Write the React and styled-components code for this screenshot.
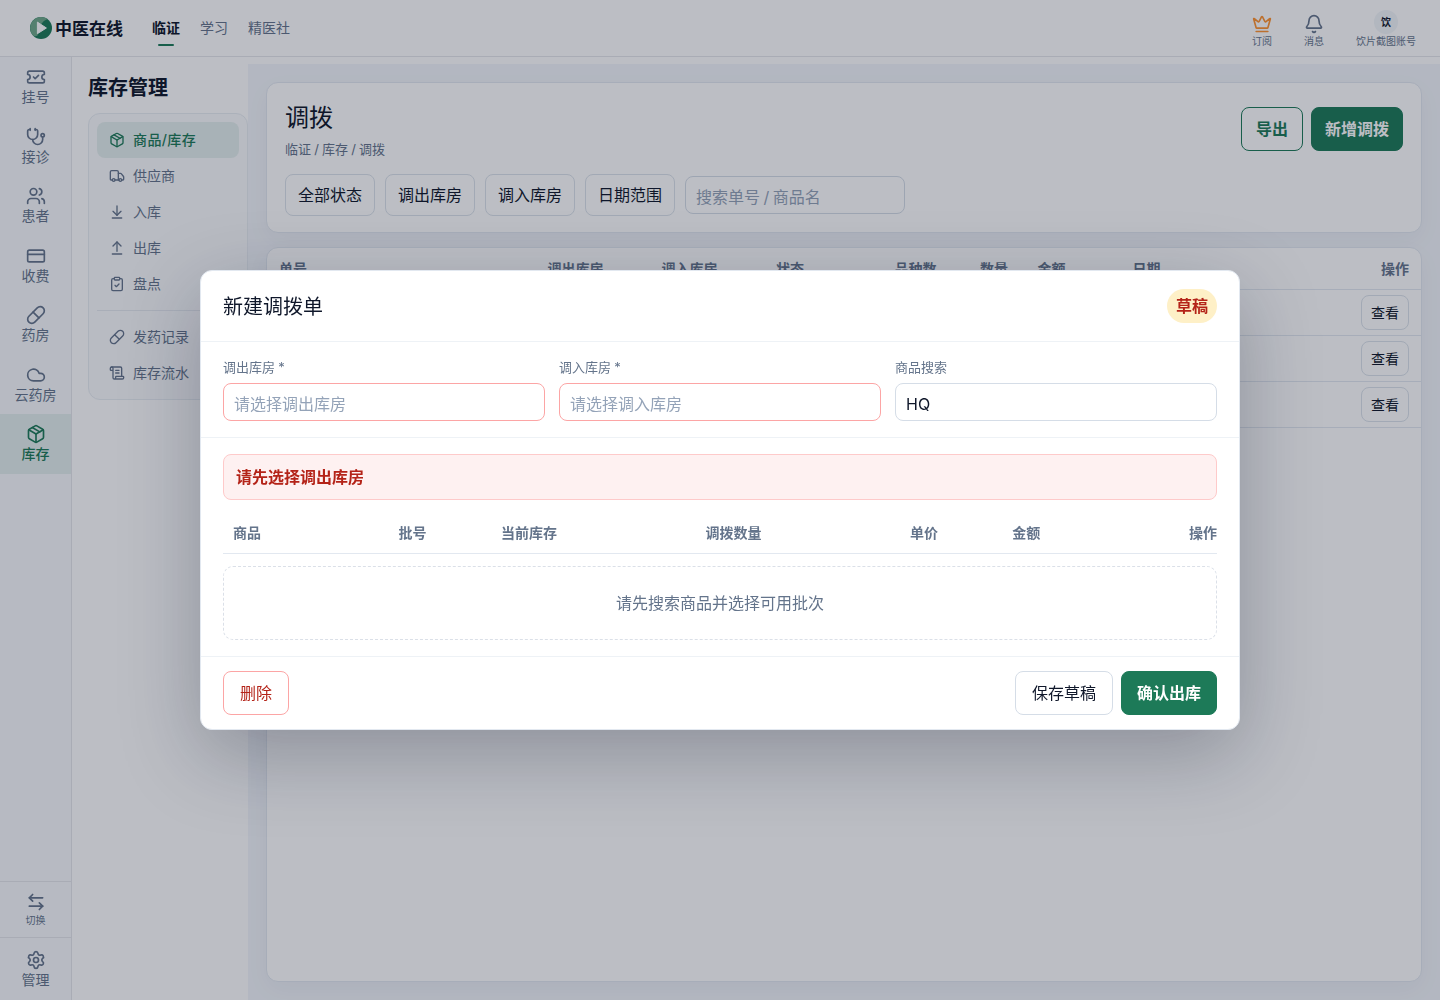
import React from "react";
import styled, { createGlobalStyle } from "styled-components";
import {
  ArrowDownToLine,
  ArrowLeftRight,
  ArrowUpFromLine,
  Bell,
  ClipboardCheck,
  Cloud,
  CreditCard,
  Crown,
  Package,
  Pill,
  ScrollText,
  Settings,
  Stethoscope,
  TicketCheck,
  Truck,
  Users,
} from "lucide-react";

const railItems = [
  { label: "挂号", icon: TicketCheck },
  { label: "接诊", icon: Stethoscope },
  { label: "患者", icon: Users },
  { label: "收费", icon: CreditCard },
  { label: "药房", icon: Pill },
  { label: "云药房", icon: Cloud },
  { label: "库存", icon: Package, active: true },
];

const menuItems = [
  { label: "商品/库存", icon: Package, active: true },
  { label: "供应商", icon: Truck },
  { label: "入库", icon: ArrowDownToLine },
  { label: "出库", icon: ArrowUpFromLine },
  { label: "盘点", icon: ClipboardCheck },
];

const recordItems = [
  { label: "发药记录", icon: Pill },
  { label: "库存流水", icon: ScrollText },
];

const filters = ["全部状态", "调出库房", "调入库房", "日期范围"];
const orderColumns = ["单号", "调出库房", "调入库房", "状态", "品种数", "数量", "金额", "日期", "操作"];
const batchColumns = ["商品", "批号", "当前库存", "调拨数量", "单价", "金额", "操作"];

const Logo = () => (
  <svg width="22" height="22" viewBox="0 0 22 22">
    <circle cx="11" cy="11" r="11" fill="#1d7a58" />
    <path d="M3 18.5A11 11 0 0 1 17.5 2.1Q9 5 7.5 18.5Q5 19.8 3 18.5Z" fill="#6fa98a" />
    <path d="M7.4 5.1v11.6l9-5.7z" fill="#fff" stroke="#fff" strokeWidth="1" strokeLinejoin="round" />
  </svg>
);

const MenuLink = ({ item }) => {
  const Icon = item.icon;
  return (
    <MenuItem $active={item.active}>
      <Icon size={16} strokeWidth={2} />
      <MenuText>{item.label}</MenuText>
    </MenuItem>
  );
};

const TransferDialog = () => (
  <Backdrop>
    <Dialog>
      <DialogHeader>
        <DialogTitle>新建调拨单</DialogTitle>
        <StatusBadge>草稿</StatusBadge>
      </DialogHeader>
      <FieldRow>
        <Field>
          <FieldLabel>调出库房 *</FieldLabel>
          <Input $invalid placeholder="请选择调出库房" />
        </Field>
        <Field>
          <FieldLabel>调入库房 *</FieldLabel>
          <Input $invalid placeholder="请选择调入库房" />
        </Field>
        <Field>
          <FieldLabel>商品搜索</FieldLabel>
          <Input defaultValue="HQ" />
        </Field>
      </FieldRow>
      <DialogBody>
        <Alert>请先选择调出库房</Alert>
        <BatchHead>
          {batchColumns.map((name) => (
            <span key={name}>{name}</span>
          ))}
        </BatchHead>
        <Empty>请先搜索商品并选择可用批次</Empty>
      </DialogBody>
      <DialogFooter>
        <Button $variant="danger">删除</Button>
        <Actions>
          <Button>保存草稿</Button>
          <Button $variant="primary">确认出库</Button>
        </Actions>
      </DialogFooter>
    </Dialog>
  </Backdrop>
);

const App = () => (
  <>
    <GlobalStyle />
    <Page>
      <TopBar>
        <Brand>
          <Logo />
          <BrandName>中医在线</BrandName>
        </Brand>
        <TopNav>
          <TopLink $active>临证</TopLink>
          <TopLink>学习</TopLink>
          <TopLink>精医社</TopLink>
        </TopNav>
        <TopActions>
          <TopAction $icon="#ff9430">
            <Crown size={20} strokeWidth={2} />
            订阅
          </TopAction>
          <TopAction>
            <Bell size={20} strokeWidth={2} />
            消息
          </TopAction>
          <Account>
            <Avatar>饮</Avatar>
            饮片截图账号
          </Account>
        </TopActions>
      </TopBar>
      <Body>
        <Rail>
          {railItems.map(({ label, icon: Icon, active }) => (
            <RailItem key={label} $active={active}>
              <Icon size={20} strokeWidth={2} />
              {label}
            </RailItem>
          ))}
          <RailSpacer />
          <RailSwitch>
            <ArrowLeftRight size={20} strokeWidth={2} />
            切换
          </RailSwitch>
          <RailManage>
            <Settings size={20} strokeWidth={2} />
            管理
          </RailManage>
        </Rail>
        <SidePanel>
          <SideTitle>库存管理</SideTitle>
          <Menu>
            {menuItems.map((item) => (
              <MenuLink key={item.label} item={item} />
            ))}
            <MenuDivider />
            {recordItems.map((item) => (
              <MenuLink key={item.label} item={item} />
            ))}
          </Menu>
        </SidePanel>
        <Main>
          <Card>
            <CardHeader>
              <Heading>
                <PageTitle>调拨</PageTitle>
                <Crumbs>临证 / 库存 / 调拨</Crumbs>
              </Heading>
              <Actions>
                <Button $variant="outline">导出</Button>
                <Button $variant="primary" $compact>新增调拨</Button>
              </Actions>
            </CardHeader>
            <FilterRow>
              {filters.map((name) => (
                <FilterButton key={name}>{name}</FilterButton>
              ))}
              <SearchInput placeholder="搜索单号 / 商品名" />
            </FilterRow>
          </Card>
          <TableCard>
            <OrderHead>
              {orderColumns.map((name) => (
                <span key={name}>{name}</span>
              ))}
            </OrderHead>
            {[1, 2, 3].map((row) => (
              <OrderRow key={row}>
                <ViewButton>查看</ViewButton>
              </OrderRow>
            ))}
          </TableCard>
        </Main>
      </Body>
    </Page>
    <TransferDialog />
  </>
);

const GlobalStyle = createGlobalStyle`
  * {
    box-sizing: border-box;
  }

  body {
    margin: 0;
    background: #fff;
    color: #0f172a;
    font-family: Inter, "Noto Sans CJK SC", sans-serif;
    font-size: 16px;
    line-height: 1.5;
    overflow: hidden;
  }

  button, input {
    font: inherit;
    color: inherit;
    margin: 0;
  }
`;

const Page = styled.div`
  display: flex;
  flex-direction: column;
  height: 1000px;
  background: #fff;
`;

const TopBar = styled.header`
  display: flex;
  align-items: center;
  flex: none;
  height: 57px;
  padding: 0 24px 0 30px;
  border-bottom: 1px solid #e5e7eb;
`;

const Brand = styled.div`
  display: flex;
  align-items: center;
  gap: 3px;
  width: 122px;
  font-size: 17px;
  font-weight: 700;
  white-space: nowrap;
`;

const BrandName = styled.span`
  padding-top: 3px;
`;

const TopNav = styled.nav`
  display: flex;
  gap: 20px;
  flex: 1;
  padding-bottom: 2px;
`;

const TopLink = styled.a`
  position: relative;
  font-size: 14px;
  font-weight: ${(p) => (p.$active ? 700 : 400)};
  color: ${(p) => (p.$active ? "#0f172a" : "#64748b")};

  &::after {
    content: ${(p) => (p.$active ? '""' : "none")};
    position: absolute;
    left: 6px;
    bottom: -8px;
    width: 16px;
    height: 2px;
    border-radius: 1px;
    background: #1d7a58;
  }
`;

const TopActions = styled.div`
  display: flex;
  gap: 32px;
  height: 38px;
  color: #64748b;
  font-size: 10px;
  line-height: 15px;
`;

const TopAction = styled.div`
  display: flex;
  flex-direction: column;
  align-items: center;
  width: 20px;
  padding-top: 5px;

  svg {
    flex: none;
    color: ${(p) => p.$icon || "#64748b"};
  }
`;

const Account = styled.div`
  display: flex;
  flex-direction: column;
  align-items: center;
  margin-top: 1px;
`;

const Avatar = styled.span`
  display: grid;
  place-items: center;
  flex: none;
  width: 24px;
  height: 24px;
  border-radius: 50%;
  background: #f1f5f9;
  color: #0f172a;
  font-size: 10px;
  font-weight: 600;
`;

const Body = styled.div`
  display: flex;
  flex: 1;
  min-height: 0;
`;

const Rail = styled.aside`
  display: flex;
  flex-direction: column;
  width: 72px;
  background: #f8fafc;
  border-right: 1px solid #e5e7eb;
`;

const RailItem = styled.a`
  display: flex;
  flex-direction: column;
  align-items: center;
  height: 59.5px;
  padding-top: 10px;
  font-size: 14px;
  line-height: 20px;
  font-weight: ${(p) => (p.$active ? 500 : 400)};
  color: ${(p) => (p.$active ? "#1d7a58" : "#64748b")};
  background: ${(p) => (p.$active ? "#e4efed" : "transparent")};

  svg {
    flex: none;
  }
`;

const RailSpacer = styled.div`
  flex: 1;
`;

const RailSwitch = styled(RailItem)`
  height: 56px;
  font-size: 10px;
  line-height: 17px;
  border-top: 1px solid #e5e7eb;
`;

const RailManage = styled(RailItem)`
  height: 63px;
  padding-top: 12px;
  border-top: 1px solid #e5e7eb;
`;

const SidePanel = styled.aside`
  width: 176px;
  padding: 16px 0 0 16px;
`;

const SideTitle = styled.h2`
  margin: 0 0 10px;
  font-size: 20px;
  line-height: 30px;
  font-weight: 700;
`;

const Menu = styled.nav`
  padding: 8px;
  border: 1px solid #e8edf2;
  border-radius: 12px;
  background: #fafbfd;
`;

const MenuItem = styled.a`
  display: flex;
  align-items: center;
  gap: 8px;
  height: 36px;
  padding: 0 12px;
  border-radius: 8px;
  font-size: 14px;
  font-weight: ${(p) => (p.$active ? 500 : 400)};
  letter-spacing: ${(p) => (p.$active ? "0.4px" : "normal")};
  color: ${(p) => (p.$active ? "#1d7a58" : "#64748b")};
  background: ${(p) => (p.$active ? "#e4efed" : "transparent")};
`;

const MenuText = styled.span`
  padding-bottom: 2px;
`;

const MenuDivider = styled.hr`
  height: 1px;
  margin: 8px 0;
  border: 0;
  background: #e5e9ef;
`;

const Main = styled.main`
  display: flex;
  flex-direction: column;
  gap: 14px;
  flex: 1;
  margin-top: 7px;
  padding: 18px;
  background: #f3f6fb;
`;

const Card = styled.section`
  flex: none;
  height: 151px;
  padding: 18px;
  border: 1px solid #e2e8f0;
  border-radius: 12px;
  background: #fff;
  box-shadow: 0 8px 24px rgba(15, 23, 42, 0.04);
`;

const CardHeader = styled.div`
  display: flex;
  align-items: center;
  justify-content: space-between;
  height: 56px;
`;

const Heading = styled.div`
  padding-top: 2px;
`;

const PageTitle = styled.h1`
  margin: 0 0 6px;
  font-size: 24px;
  line-height: 32px;
  font-weight: 400;
`;

const Crumbs = styled.div`
  font-size: 13px;
  line-height: 19px;
  word-spacing: -0.5px;
  color: #64748b;
`;

const Actions = styled.div`
  display: flex;
  gap: 8px;
`;

const variants = {
  plain: "color: #0f172a; border-color: #d5dde7;",
  outline: "color: #1d7a58; border-color: #1d7a58; font-weight: 600; padding: 0 14px;",
  primary: "color: #fff; border-color: #1d7a58; background: #1d7a58; font-weight: 700; padding: 0 15px;",
  danger: "color: #b42318; border-color: #fca5a5;",
};

const Button = styled.button`
  height: 44px;
  padding: 0 16px;
  border: 1px solid;
  border-radius: 8px;
  background: #fff;
  white-space: nowrap;
  ${(p) => variants[p.$variant || "plain"]}
  ${(p) => p.$compact && "padding: 0 13px;"}
`;

const FilterRow = styled.div`
  display: flex;
  align-items: center;
  gap: 10px;
  margin-top: 17px;
`;

const FilterButton = styled.button`
  width: 90px;
  height: 42px;
  padding: 0;
  border: 1px solid #dbe2ea;
  border-radius: 8px;
  background: #fff;
`;

const Input = styled.input`
  width: 100%;
  height: 38px;
  padding: 3px 10px 0;
  border: 1px solid ${(p) => (p.$invalid ? "#fca5a5" : "#d5dde7")};
  border-radius: 8px;
  background: #fff;
  outline: none;

  &::placeholder {
    color: #94a3b8;
    opacity: 1;
  }
`;

const SearchInput = styled(Input)`
  width: 220px;
  word-spacing: -1px;
`;

const TableCard = styled(Card)`
  flex: 1;
  padding: 0;
  overflow: hidden;
`;

const OrderHead = styled.div`
  display: grid;
  grid-template-columns: 268.5px 114px 114.5px 118.5px 85.5px 57.5px 95px 1fr auto;
  align-items: center;
  height: 42px;
  padding: 0 12px;
  border-bottom: 1px solid #e2e8f0;
  color: #64748b;
  font-size: 14px;
  font-weight: 600;
`;

const OrderRow = styled.div`
  display: flex;
  align-items: center;
  justify-content: flex-end;
  height: 46px;
  padding: 0 12px;
  border-bottom: 1px solid #e2e8f0;
`;

const ViewButton = styled.button`
  width: 48px;
  height: 35px;
  padding: 0;
  border: 1px solid #dbe2ea;
  border-radius: 8px;
  background: #fff;
  font-size: 14px;
`;

const Backdrop = styled.div`
  position: fixed;
  top: 0;
  left: 0;
  right: 0;
  height: 1000px;
  display: grid;
  place-items: center;
  overflow: hidden;
  background: rgba(15, 23, 42, 0.28);
`;

const Dialog = styled.div`
  width: 1040px;
  border: 1px solid #e2e8f0;
  border-radius: 12px;
  background: #fff;
  box-shadow: 0 24px 80px rgba(15, 23, 42, 0.28);
`;

const DialogHeader = styled.div`
  display: flex;
  align-items: center;
  justify-content: space-between;
  height: 71px;
  padding: 0 22px;
  border-bottom: 1px solid #eef2f6;
`;

const DialogTitle = styled.h3`
  margin: 0;
  padding-top: 2px;
  font-size: 20px;
  font-weight: 400;
`;

const StatusBadge = styled.span`
  padding: 5px 9px;
  border-radius: 999px;
  background: #fef0c7;
  color: #b42318;
  font-weight: 600;
`;

const FieldRow = styled.div`
  display: grid;
  grid-template-columns: repeat(3, 1fr);
  gap: 14px;
  padding: 16px 22px;
  border-bottom: 1px solid #eef2f6;
`;

const Field = styled.label`
  display: flex;
  flex-direction: column;
  gap: 6px;
`;

const FieldLabel = styled.span`
  font-size: 13px;
  line-height: 19px;
  word-spacing: -0.5px;
  color: #64748b;
`;

const DialogBody = styled.div`
  display: flex;
  flex-direction: column;
  gap: 12px;
  padding: 16px 22px;
`;

const Alert = styled.div`
  display: flex;
  align-items: center;
  height: 46px;
  padding: 0 12px;
  border: 1px solid #fecaca;
  border-radius: 8px;
  background: #fef1f1;
  color: #b42318;
  font-weight: 600;
`;

const BatchHead = styled.div`
  display: grid;
  grid-template-columns: 165.6px 102.4px 204.5px 204.5px 102.3px 1fr auto;
  align-items: center;
  height: 42px;
  padding-left: 10px;
  border-bottom: 1px solid #e2e8f0;
  color: #64748b;
  font-size: 14px;
  font-weight: 600;
`;

const Empty = styled.div`
  display: grid;
  place-items: center;
  height: 74px;
  border: 1px dashed #dbe0e8;
  border-radius: 10px;
  color: #64748b;
`;

const DialogFooter = styled.div`
  display: flex;
  justify-content: space-between;
  padding: 14px 22px;
  border-top: 1px solid #eef2f6;
`;

export default App;
